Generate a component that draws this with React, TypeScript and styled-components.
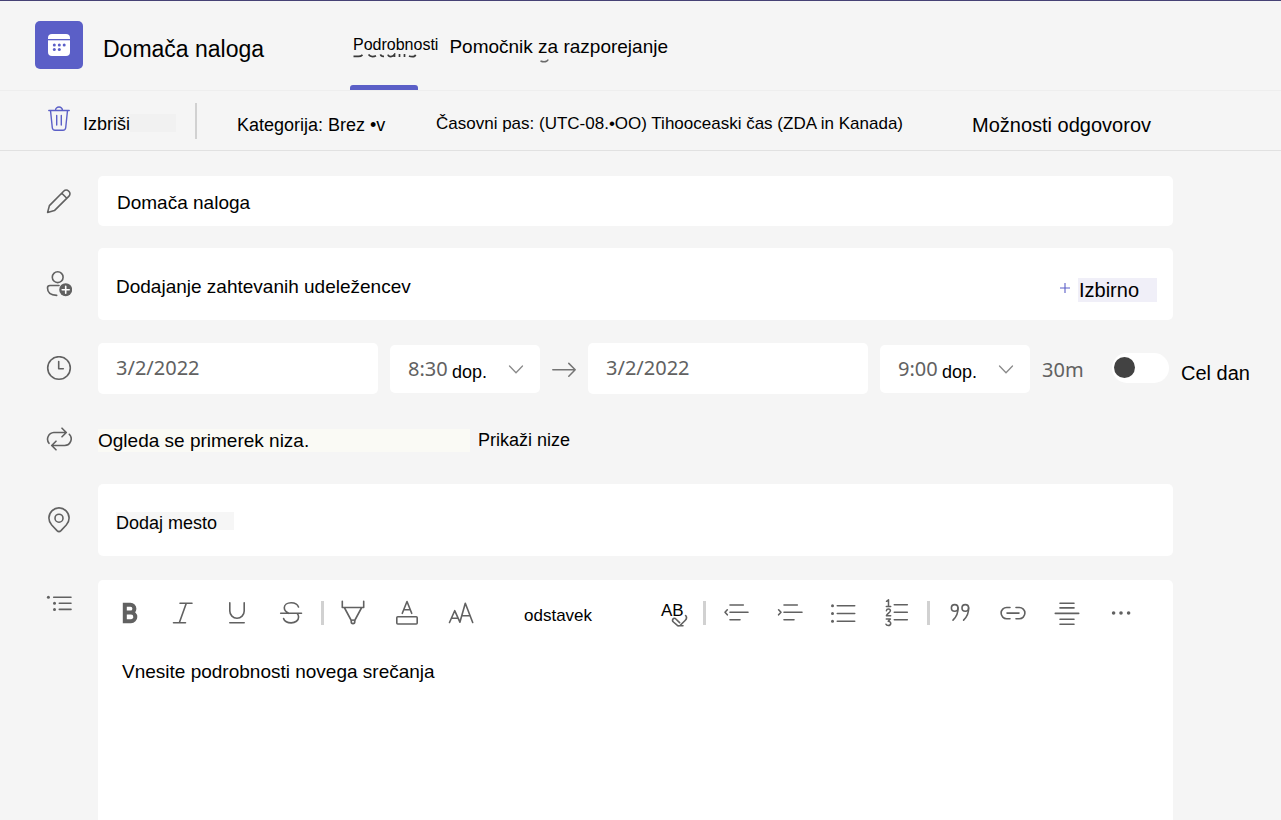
import React from "react";
import styled, { createGlobalStyle, css } from "styled-components";

const color = {
  page: "#f5f5f5",
  field: "#ffffff",
  text: "#000000",
  muted: "#616161",
  brand: "#5b5fc7",
  line: "#e1e1e1",
};

const uiFont = '"Liberation Sans", Arial, sans-serif';
const digitFont = '"Noto Sans", "Open Sans", sans-serif';

const GlobalStyle = createGlobalStyle`
  *, *::before, *::after { box-sizing: border-box; }
  body { margin: 0; background: ${color.page}; color: ${color.text}; font-family: ${uiFont}; }
  button, input, select, textarea {
    margin: 0; padding: 0; border: 0; background: none; color: inherit;
    font-family: inherit; outline: none; border-radius: 0;
  }
  button, select { cursor: pointer; }
  svg { display: block; flex: none; }
`;

const Page = styled.div`
  display: flex;
  flex-direction: column;
  min-height: 100vh;
  border-top: 1px solid #464275;
`;

/* Header */

const Header = styled.header`
  display: flex;
  align-items: center;
  height: 90px;
  padding-left: 35px;
  border-bottom: 1px solid #eeeeee;
  > svg { margin-bottom: 2px; }
`;

const Title = styled.h1`
  width: 267px;
  margin: 0;
  padding: 6px 0 0 20px;
  font-size: 23px;
  font-weight: 400;
  line-height: 28px;
  white-space: nowrap;
`;

const Tabs = styled.nav`
  display: flex;
  align-self: stretch;
`;

const Tab = styled.button<{ $active?: boolean }>`
  position: relative;
  padding: ${(p) => (p.$active ? "0 8px 2px 3px" : "2px 0 0 3px")};
  font-size: ${(p) => (p.$active ? 16 : 19)}px;
  line-height: 20px;
  white-space: nowrap;
  ${(p) =>
    p.$active &&
    css`
      &::after {
        content: "";
        position: absolute;
        left: 0;
        bottom: 0;
        width: 68px;
        height: 5px;
        border-radius: 3px 3px 0 0;
        background: ${color.brand};
      }
    `}
`;

/* Worn marks left under a tab label */
const TabMarks = styled.svg<{ $left: number; $top: number }>`
  position: absolute;
  left: ${(p) => p.$left}px;
  top: ${(p) => p.$top}px;
`;

/* Command bar */

const CommandBar = styled.div`
  display: flex;
  align-items: center;
  height: 60px;
  padding-left: 48px;
  border-bottom: 1px solid ${color.line};
  white-space: nowrap;
`;

const DeleteButton = styled.button`
  display: flex;
  align-items: center;
  gap: 13px;
  width: 128px;
  font-size: 18px;
  line-height: 20px;
  text-align: left;
  svg { margin-bottom: 4px; }
`;

const DeleteLabel = styled.span`
  flex: 1;
  margin-top: 6px;
  background: linear-gradient(#f1f1f1, #f1f1f1) 100% 0 / 46px 18px no-repeat;
`;

const BarDivider = styled.span`
  width: 2px;
  height: 36px;
  margin: 0 40px 0 19px;
  background: #d1d1d1;
`;

const CategorySelect = styled.select`
  appearance: none;
  width: 176px;
  margin: 8px 23px 0 0;
  font-size: 18px;
  line-height: 22px;
`;

const BarButton = styled.button<{ $size: number }>`
  margin: ${(p) => (p.$size > 18 ? 8 : 6)}px 69px 0 0;
  font-size: ${(p) => p.$size}px;
  line-height: 22px;
`;

/* Form */

const Form = styled.form`
  flex: 1;
  display: flex;
  flex-direction: column;
  padding-top: 25px;
`;

const Row = styled.div<{ $after: number; $grow?: boolean }>`
  display: grid;
  grid-template-columns: 52px minmax(0, 1fr);
  align-items: ${(p) => (p.$grow ? "stretch" : "center")};
  margin-bottom: ${(p) => p.$after}px;
  padding: 0 108px 0 46px;
  ${(p) => p.$grow && "flex: 1;"}
`;

const fieldBox = css`
  background: ${color.field};
  border-radius: 5px;
`;

const TextField = styled.input<{ $tall?: boolean }>`
  ${fieldBox}
  width: 100%;
  height: ${(p) => (p.$tall ? 72 : 50)}px;
  padding: ${(p) => (p.$tall ? "6px 18px 0" : "4px 19px 0")};
  font-size: ${(p) => (p.$tall ? 18 : 19)}px;
  &::placeholder { color: ${color.text}; opacity: 1; }
`;

const PlaceField = styled(TextField)`
  background: linear-gradient(#f6f6f6, #f6f6f6) 18px 28px / 118px 18px no-repeat ${color.field};
`;

const PeopleField = styled.div`
  ${fieldBox}
  display: flex;
  align-items: center;
  height: 72px;
  padding: 0 16px 0 18px;
`;

const PeopleInput = styled.input`
  flex: 1;
  height: 60px;
  padding-top: 6px;
  font-size: 19px;
  &::placeholder { color: ${color.text}; opacity: 1; }
`;

const OptionalButton = styled.button`
  display: flex;
  align-items: center;
  gap: 8px;
  margin-top: 12px;
  font-size: 20px;
  line-height: 24px;
  svg { margin-bottom: 4px; }
`;

const OptionalLabel = styled.span`
  width: 79px;
  padding-left: 1px;
  background: #f0eff8;
  text-align: left;
`;

const DateRow = styled.div`
  display: flex;
  align-items: center;
  gap: 12px;
  width: max-content;
  color: ${color.muted};
  font-family: ${digitFont};
  font-size: 20px;
  line-height: 24px;
`;

const DateInput = styled.input`
  ${fieldBox}
  width: 280px;
  height: 51px;
  padding: 0 18px 2px;
  font-size: 20px;
`;

const TimeBox = styled.div`
  ${fieldBox}
  display: grid;
  align-items: center;
  width: 150px;
  height: 48px;
  > * { grid-area: 1 / 1; }
  svg { justify-self: end; margin-right: 16px; pointer-events: none; }
`;

const TimeSelect = styled.select`
  appearance: none;
  width: 100%;
  height: 48px;
  padding-left: 18px;
  font-size: 20px;
`;

const DayPart = styled.span`
  padding: 6px 0 0 62px;
  color: ${color.text};
  font: 18px/20px ${uiFont};
  pointer-events: none;
`;

const Duration = styled.span`
  width: 58px;
  padding-top: 2px;
`;

const Toggle = styled.input`
  appearance: none;
  display: flex;
  align-items: center;
  width: 57px;
  height: 30px;
  padding-left: 2px;
  margin-bottom: 2px;
  border-radius: 15px;
  background: ${color.field};
  cursor: pointer;
  &::before {
    content: "";
    width: 21px;
    height: 21px;
    border-radius: 50%;
    background: #424242;
  }
  &:checked { justify-content: flex-end; padding-right: 2px; }
`;

const ToggleLabel = styled.label`
  padding-top: 8px;
  color: ${color.text};
  font: 20px/24px ${uiFont};
`;

const SeriesNote = styled.div`
  display: flex;
  align-items: center;
  gap: 8px;
  height: 24px;
  line-height: 23px;
  white-space: nowrap;
`;

const SeriesText = styled.span`
  width: 372px;
  background: #fafaf5;
  font-size: 19px;
`;

const SeriesLink = styled.a`
  color: ${color.text};
  font-size: 18px;
  text-decoration: none;
`;

/* Editor */

const ListMark = styled.span`
  padding-top: 10px;
`;

const Editor = styled.div`
  ${fieldBox}
  border-radius: 5px 5px 0 0;
  display: flex;
  flex-direction: column;
`;

const Tools = styled.div`
  display: flex;
  align-items: center;
  height: 66px;
  padding-left: 4px;
`;

const Tool = styled.button`
  display: flex;
  justify-content: center;
  align-items: center;
  width: 54px;
  height: 40px;
`;

const ToolDivider = styled.span`
  width: 3px;
  height: 24px;
  margin: 0 2px 0 3px;
  background: #d1d1d1;
`;

const StyleSelect = styled.select`
  appearance: none;
  width: 158px;
  height: 40px;
  padding: 4px 0 0 36px;
  font-size: 17px;
`;

const Details = styled.textarea`
  flex: 1;
  min-height: 160px;
  padding: 14px 24px;
  resize: none;
  font-size: 19px;
  line-height: 24px;
  &::placeholder { color: ${color.text}; opacity: 1; }
`;

type IconProps = { children: React.ReactNode; size?: number; weight?: number };

const Icon = ({ children, size = 26, weight = 1.6 }: IconProps) => (
  <svg
    width={size}
    height={size}
    viewBox={`0 0 ${size} ${size}`}
    fill="none"
    stroke={color.muted}
    strokeWidth={weight}
    strokeLinecap="round"
    strokeLinejoin="round"
    aria-hidden="true"
  >
    {children}
  </svg>
);

const Dots = ({ at, r = 1.5 }: { at: number[][]; r?: number }) => (
  <g fill={color.muted} stroke="none">
    {at.map(([x, y]) => (
      <circle key={`${x}-${y}`} cx={x} cy={y} r={r} />
    ))}
  </g>
);

const Logo = () => (
  <svg width="48" height="48" viewBox="0 0 48 48" aria-hidden="true">
    <rect width="48" height="48" rx="5" fill={color.brand} />
    <rect x="13" y="13" width="22" height="22" rx="4" fill="#fff" />
    <g fill={color.brand}>
      <rect x="13" y="18" width="22" height="1.3" />
      <circle cx="19.3" cy="24" r="1.5" />
      <circle cx="24.3" cy="24" r="1.5" />
      <circle cx="29.2" cy="24" r="1.5" />
      <circle cx="19.3" cy="28.5" r="1.5" />
      <circle cx="24.3" cy="28.5" r="1.5" />
    </g>
  </svg>
);

const Trash = () => (
  <svg
    width="22"
    height="26"
    viewBox="0 0 22 26"
    fill="none"
    stroke={color.brand}
    strokeWidth="1.4"
    strokeLinecap="round"
    strokeLinejoin="round"
    aria-hidden="true"
  >
    <path d="M.8 4.5H21.2M7.5 4.5a3.5 3.5 0 0 1 7 0M2.5 4.5l1.8 17.2a2.8 2.8 0 0 0 2.8 2.5h7.8a2.8 2.8 0 0 0 2.8-2.5L19.5 4.5M8.7 9.5v9.5M13.3 9.5v9.5" />
  </svg>
);

const Chevron = () => (
  <svg width="16" height="10" viewBox="0 0 16 10" fill="none" stroke="#8a8a8a" strokeWidth="1.3" strokeLinecap="round" aria-hidden="true">
    <path d="M1.5 2L8 8.8l6.5-6.8" />
  </svg>
);

const TimePicker = ({ label, value }: { label: string; value: string }) => (
  <TimeBox>
    <TimeSelect aria-label={label} defaultValue={value}>
      <option>{value}</option>
    </TimeSelect>
    <DayPart>dop.</DayPart>
    <Chevron />
  </TimeBox>
);

const ToolButton = ({ label, weight, children }: { label: string; weight?: number; children: React.ReactNode }) => (
  <Tool type="button" aria-label={label}>
    <Icon size={30} weight={weight}>
      {children}
    </Icon>
  </Tool>
);

const indentLines = "M10 7h13.3M10 14.3h18M10 21.7h10";

export default function App() {
  return (
    <Page>
      <GlobalStyle />
      <Header>
        <Logo />
        <Title>Domača naloga</Title>
        <Tabs>
          <Tab type="button" $active>
            Podrobnosti
            <TabMarks $left={3} $top={52} width="64" height="5" viewBox="0 0 64 5" fill="none" stroke="#3a3a3a" strokeWidth="1.7" aria-hidden="true">
              <path d="M.5 3.4h5q2.4 0 4-1.6M15.5 1.6q1.5 2 4 2 2 0 3.5-.8M27.5 1.4q.4 2.2 3.5 2M35 1.6q.5 2 2.8 2t3.7-2v2.4M46.5 1v3M51.5 1v3M56 3q1.4.7 3.4.7 2.6 0 3.2-2" />
            </TabMarks>
          </Tab>
          <Tab type="button">
            Pomočnik za razporejanje
            <TabMarks $left={94} $top={58} width="9" height="4" viewBox="0 0 9 4" fill="none" stroke="#6a6a6a" strokeWidth="1.5" aria-hidden="true">
              <path d="M.5 2q3.5 1.5 6 .3 1.2-.6 1.7-1.8" />
            </TabMarks>
          </Tab>
        </Tabs>
      </Header>

      <CommandBar>
        <DeleteButton type="button">
          <Trash />
          <DeleteLabel>Izbriši</DeleteLabel>
        </DeleteButton>
        <BarDivider />
        <CategorySelect aria-label="Kategorija">
          <option>Kategorija: Brez •v</option>
        </CategorySelect>
        <BarButton type="button" $size={17}>
          Časovni pas: (UTC-08.•OO) Tihooceaski čas (ZDA in Kanada)
        </BarButton>
        <BarButton type="button" $size={20}>Možnosti odgovorov</BarButton>
      </CommandBar>

      <Form>
        <Row $after={22}>
          <Icon>
            <path d="M1.6 24.4l1.8-6.8L17.9 3a3.2 3.2 0 0 1 4.6 0l.5.5a3.2 3.2 0 0 1 0 4.6L8.4 22.6zM15.8 5.2l5 5" />
          </Icon>
          <TextField aria-label="Naslov" defaultValue="Domača naloga" />
        </Row>

        <Row $after={23}>
          <Icon>
            <circle cx="11.7" cy="6.2" r="5.4" />
            <path d="M13 14.5H4a2.5 2.5 0 0 0-2.5 2.5c0 4.8 4 7.2 9.2 7.4" />
            <circle cx="19.7" cy="18.7" r="6.5" fill={color.muted} stroke="none" />
            <path d="M19.7 15.2v7M16.2 18.7h7" stroke="#fff" />
          </Icon>
          <PeopleField>
            <PeopleInput aria-label="Udeleženci" placeholder="Dodajanje zahtevanih udeležencev" />
            <OptionalButton type="button">
              <svg width="10" height="10" viewBox="0 0 10 10" stroke={color.brand} strokeWidth="1.1" aria-hidden="true">
                <path d="M5 0v10M0 5h10" />
              </svg>
              <OptionalLabel>Izbirno</OptionalLabel>
            </OptionalButton>
          </PeopleField>
        </Row>

        <Row $after={33}>
          <Icon>
            <circle cx="13" cy="12" r="11.3" />
            <path d="M12.7 5.5v7.2h4.6" />
          </Icon>
          <DateRow>
            <DateInput aria-label="Začetni datum" defaultValue="3/2/2022" />
            <TimePicker label="Začetni čas" value="8:30" />
            <svg width="24" height="16" viewBox="0 0 24 16" fill="none" stroke="#757575" strokeWidth="1.5" strokeLinecap="round" strokeLinejoin="round" aria-hidden="true">
              <path d="M.8 8.8h22.4M16.8 2.4l6.4 6.4-6.4 6.4" />
            </svg>
            <DateInput aria-label="Končni datum" defaultValue="3/2/2022" />
            <TimePicker label="Končni čas" value="9:00" />
            <Duration>30m</Duration>
            <Toggle type="checkbox" id="all-day" />
            <ToggleLabel htmlFor="all-day">Cel dan</ToggleLabel>
          </DateRow>
        </Row>

        <Row $after={31}>
          <Icon>
            <path d="M3 16.3A6.7 6.7 0 0 1 7.8 5.5H20M16 1.2l4.3 4.3L16 9.8M23.3 7.3a6.6 6.6 0 0 1-4.6 11.2H6M10 14.2l-4.3 4.3 4.3 4.3" />
          </Icon>
          <SeriesNote>
            <SeriesText>Ogleda se primerek niza.</SeriesText>
            <SeriesLink href="#series">Prikaži nize</SeriesLink>
          </SeriesNote>
        </Row>

        <Row $after={24}>
          <Icon>
            <circle cx="13" cy="11.2" r="4" />
            <path d="M13 24.6c-.8 0-1.4-.4-2-1L5.7 18a10.1 10.1 0 1 1 14.6 0L15 23.6c-.6.6-1.2 1-2 1z" />
          </Icon>
          <PlaceField $tall aria-label="Mesto" placeholder="Dodaj mesto" />
        </Row>

        <Row $after={0} $grow>
          <ListMark>
            <Icon>
              <Dots at={[[2.4, 7.2], [8.5, 13.3], [8.5, 19.4]]} />
              <path d="M7.7 7.2H25M13.3 13.3H25M13.3 19.4H25" />
            </Icon>
          </ListMark>
          <Editor>
            <Tools role="toolbar" aria-label="Oblikovanje">
              <ToolButton label="Krepko" weight={4}>
                <path d="M10.8 6.8h5.7a3.9 3.9 0 0 1 0 7.8h-5.7zM10.8 14.6H17a4.3 4.3 0 0 1 0 8.6h-6.2z" strokeLinejoin="miter" />
              </ToolButton>
              <ToolButton label="Ležeče">
                <path d="M12 5.3h12M5.5 24.7h12M18.3 5.3l-7 19.4" />
              </ToolButton>
              <ToolButton label="Podčrtano">
                <path d="M7.8 4.7V13a7.2 7.2 0 0 0 14.4 0V4.7M7.8 24.7h14.4" />
              </ToolButton>
              <ToolButton label="Prečrtano">
                <path d="M4.7 15.3h20.8M22.5 9c-1-2.7-3.8-4.2-7.3-4.2-4 0-6.9 2-6.9 5 0 2.5 1.7 4.3 4.5 5.5M21 15.3c1 1 1.6 2.2 1.6 3.6 0 3.6-3.3 6-7.4 6-3.8 0-6.6-1.6-7.6-4.3" />
              </ToolButton>
              <ToolDivider />
              <ToolButton label="Barva označevanja">
                <path d="M4.3 3.2v6.3h21.4V3.2M6.3 9.5l7 13M23.7 9.5l-7 13" />
                <circle cx="15" cy="23.8" r="1.8" />
              </ToolButton>
              <ToolButton label="Barva pisave">
                <path d="M10.3 15.3L15 3.5l4.7 11.8M12 11.7h6" />
                <rect x="4.8" y="18.8" width="20.4" height="7.2" rx="1" />
              </ToolButton>
              <ToolButton label="Velikost pisave">
                <path d="M3.5 24.5L8.7 12.7l5.2 11.5L19.3 5.3l7.4 19.2M5.7 20.3h6.3M16.5 17.7h7.5" />
              </ToolButton>
              <StyleSelect aria-label="Slog">
                <option>odstavek</option>
              </StyleSelect>
              <ToolButton label="Počisti oblikovanje">
                <text x="3" y="18" fontFamily={uiFont} fontSize="17" fill={color.text} stroke="none">AB</text>
                <path d="M27.6 17.5c1.5 1.7 1.2 3.3-.5 5l-4.8 4.8c-1 .8-2 .7-2.9 0l-4-3.3c-1.9-1.6-.2-4.6 1.9-3.5l4.3 4.1M19.5 27.8H25" />
              </ToolButton>
              <ToolDivider />
              <ToolButton label="Zmanjšaj zamik">
                <path d={`${indentLines}M7.3 11.8L5 14.3l2.3 2.5`} />
              </ToolButton>
              <ToolButton label="Povečaj zamik">
                <path d={`${indentLines}M4.6 11.8L7 14.3l-2.4 2.5`} />
              </ToolButton>
              <ToolButton label="Označeni seznam">
                <Dots at={[[4.5, 7.8], [4.5, 15.5], [4.5, 23.2]]} />
                <path d="M9.3 7.8h17.4M9.3 15.5h17.4M9.3 23.2h17.4" />
              </ToolButton>
              <ToolButton label="Oštevilčeni seznam">
                <path d="M4.5 3.3l2-1.5v6.7M4.3 8.5h4.4M4.4 12.8c.2-2.3 4-2.2 4 0 0 1.7-3.2 2.8-4 4.9h4.3M4.3 20.9h4.1l-2.2 2.4c3.6 0 3.2 4.2 0 4.2-1.2 0-1.9-.5-2.2-1.3" strokeWidth="1.5" />
                <path d="M12.3 6.7h13M12.3 14.3h13M12.3 21.8h13" />
              </ToolButton>
              <ToolDivider />
              <ToolButton label="Citat">
                <circle cx="10.7" cy="9.9" r="3.3" />
                <path d="M14 9.9c.2 5-1.6 9-5 12.2" />
                <circle cx="21.3" cy="9.9" r="3.3" />
                <path d="M24.6 9.9c.2 5-1.6 9-5 12.2" />
              </ToolButton>
              <ToolButton label="Povezava">
                <path d="M12 9.5H8.7a5.6 5.6 0 0 0 0 11.2H12M18 9.5h3.3a5.6 5.6 0 0 1 0 11.2H18M9 15.1h12" />
              </ToolButton>
              <ToolButton label="Vodoravna črta">
                <path d="M8 5.2h14M8 9.9h14M3.3 15.4h23.4M8 21.3h14M8 26.2h14" />
              </ToolButton>
              <ToolButton label="Več možnosti">
                <Dots at={[[7.6, 15], [15, 15], [22.6, 15]]} r={1.8} />
              </ToolButton>
            </Tools>
            <Details aria-label="Podrobnosti srečanja" placeholder="Vnesite podrobnosti novega srečanja" />
          </Editor>
        </Row>
      </Form>
    </Page>
  );
}
